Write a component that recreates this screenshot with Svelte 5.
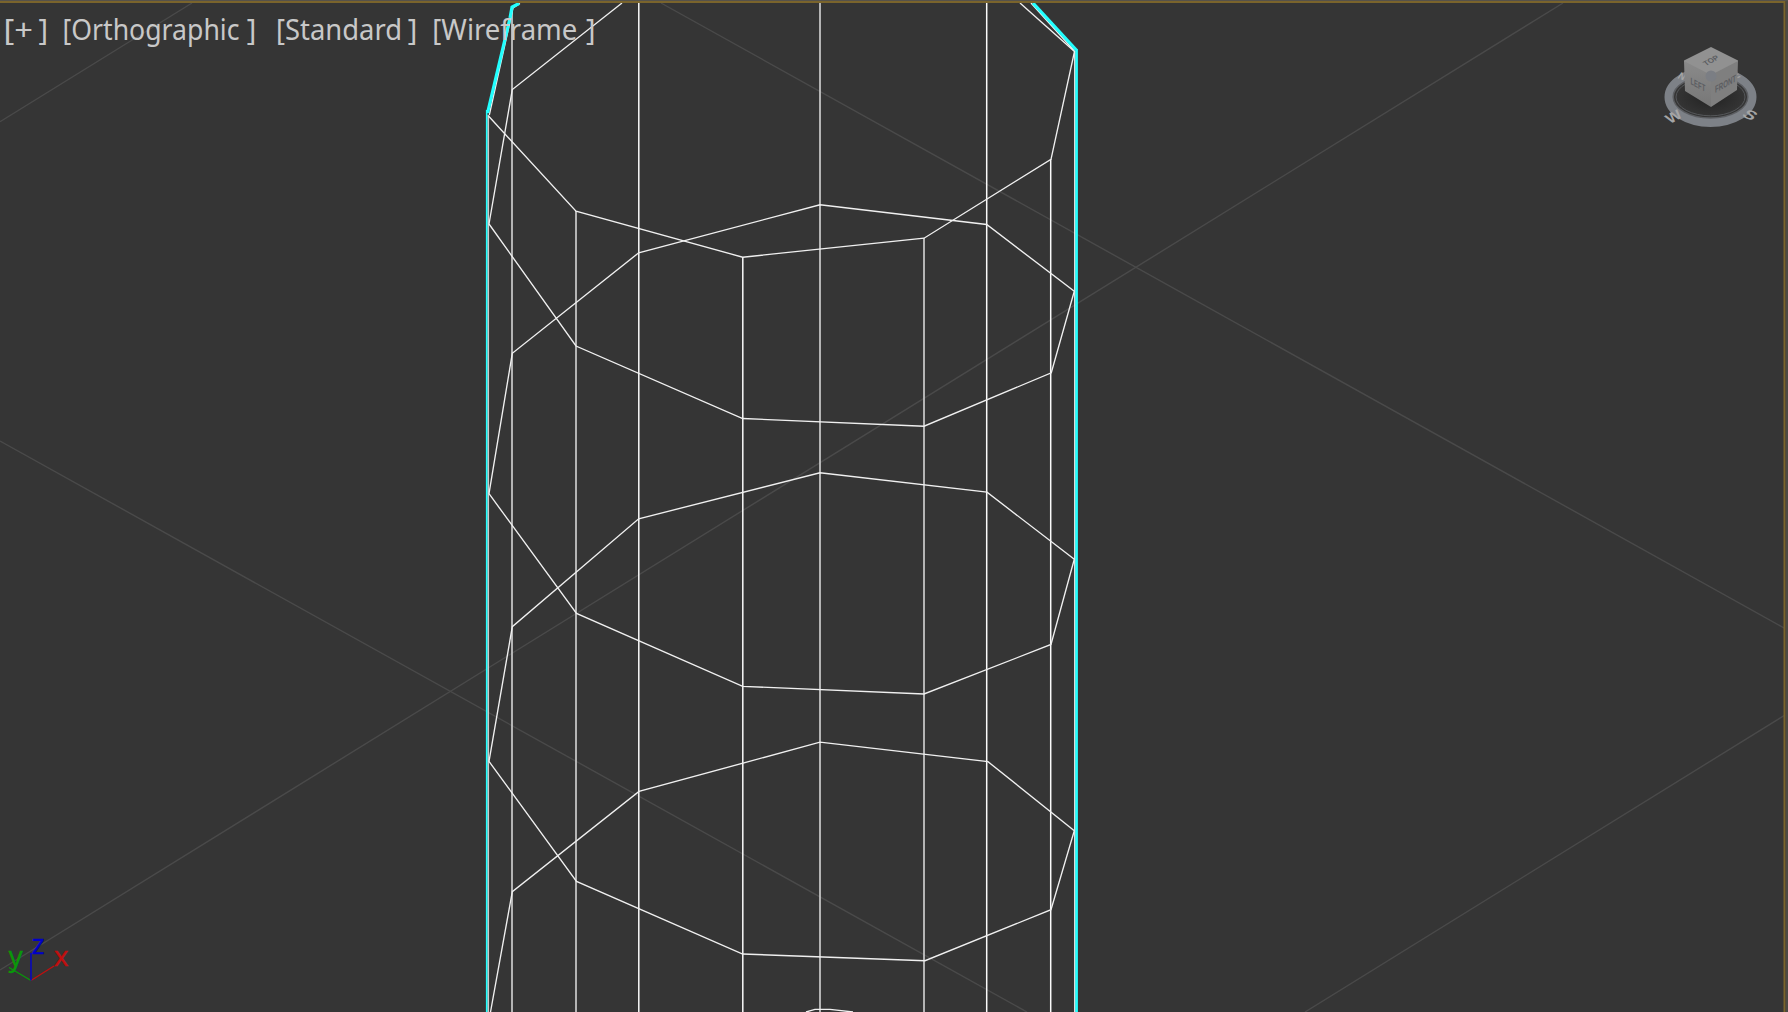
<script>
  const grid = [
    [0, 121.7, 192, 3], [661, 3, 1785, 628.5], [0, 441, 1027, 1012],
    [0, 970, 1563, 3], [1305, 1012, 1785, 715]
  ];
  // [x, top, tone]
  const columns = [
    [512, 8, 'dim'], [576, 211, 'dim'], [638.8, 3, 'lit'], [742.8, 257, 'lit'],
    [820, 3, 'dim'], [924, 238, 'dim'], [986.7, 3, 'lit'], [1050.7, 159, 'lit']
  ];
  const rings = [
    '1020,3 1074.5,51.5 1051,159.3 924,238.2 742.7,257.2 576,211.2 488.5,116',
    '622,3 512.3,89.5 489,224 576,346 742.7,418.5 924,426.2 1051.3,372.8 1074.3,291.3 986.7,224.5 820,204.8 638.7,252.8 512.3,353.3 489,493.7 576.5,613.4 742.7,686.3 924,694 1051,644.5 1074.3,559.3 987,492.2 820,472.8 638.7,518.8 512.3,626.7 489,761.4 576.5,881.4 742.7,954 925,960.7 1051,909.7 1074.3,830.7 988,761.7 820,742.2 639,791.4 512.3,891.7 490.5,1012',
    '806,1012 815,1009.3 830,1009.3 853,1012'
  ];
  // [text, x, width, x of the closing bracket]
  const labels = [
    ['[+', 3.5, 29.5, 38.5], ['[Orthographic', 62.5, 177, 246.8],
    ['[Standard', 276, 126, 407.8], ['[Wireframe', 432.3, 145, 586]
  ];
</script>

<main class="viewport">
  <svg class="scene" viewBox="0 0 1788 1012">
    <g class="grid">
      {#each grid as [x1, y1, x2, y2]}<line {x1} {y1} {x2} {y2} />{/each}
    </g>
    <g class="mesh">
      {#each columns as [x, top, tone]}<line class={tone} x1={x} x2={x} y1={top} y2="1012" />{/each}
      <path class="dim" d="M488.2 115V1012" />
      <path class="lit" d="M1074.9 51V1012" />
      {#each rings as points}<polyline {points} />{/each}
      <path d="M520 3.5L513 8L489.3 115M1031 3L1074.5 51" />
    </g>
    <path class="outline wide" d="M519 3.5L512 7L510 18L487.5 113" />
    <path class="outline thin" d="M486.7 110V1012" />
    <path class="outline wide" d="M1033 3L1076.3 50" />
    <path class="outline" d="M1076.6 49V1012" />

    <g class="labels">
      {#each labels as [text, x, width, close]}
        <text y="39.5"><tspan {x} textLength={width} lengthAdjust="spacingAndGlyphs">{text}</tspan><tspan x={close}>]</tspan></text>
      {/each}
    </g>

    <g class="axes">
      <path class="x" d="M31 980.5L54 966" />
      <path class="y" d="M31 980.5L9 967.5" />
      <path class="z" d="M31 980.5V953" />
      <text class="xl" x="53.8" y="965.6">x</text>
      <text class="yl" x="8.5" y="965.5">y</text>
      <text class="zl" x="31.5" y="953.5">z</text>
    </g>

    <g class="cube">
      <defs>
        <radialGradient id="well"><stop offset="0" stop-color="#222" /><stop offset="1" stop-color="#363636" /></radialGradient>
        <linearGradient id="face" x2="0" y2="1"><stop offset="0" stop-color="#8a8a8a" /><stop offset="1" stop-color="#777" /></linearGradient>
      </defs>
      <ellipse class="ring" cx="1710.5" cy="97" rx="41.5" ry="25.5" />
      <ellipse class="inner" cx="1710.5" cy="97" rx="37.3" ry="21" fill="url(#well)" />
      <ellipse class="rim" cx="1710.5" cy="97" rx="34.5" ry="18.8" />
      <g class="compass">
        <text transform="matrix(.8 .3 -.5 .8 1677 78)">N</text>
        <text transform="matrix(.8 -.3 .5 .8 1735 79)">E</text>
        <text class="big" transform="matrix(.95 -.5 .6 .75 1670 124)">W</text>
        <text class="big" transform="matrix(1.1 .5 -.7 .7 1741 116)">S</text>
      </g>
      <path fill="#919191" d="M1711 47L1738 60.5V62L1711 76L1684 62V60.5Z" />
      <path fill="url(#face)" d="M1684 61L1711 75V107L1685 91Z" />
      <path fill="#7f7f7f" d="M1738 61L1711 75V107L1737 90Z" />
      <circle cx="1711" cy="76" r="5.5" fill="#7b7e84" />
      <g class="names">
        <text transform="matrix(.75 -.4 .6 .6 1706 66)">TOP</text>
        <text transform="matrix(.66 .36 0 1.1 1690.5 84)">LEFT</text>
        <text transform="matrix(.68 -.38 0 1.1 1715 93)">FRONT</text>
      </g>
    </g>
    <path class="edge" d="M0 .5H1788M1787 0V1012" />
    <path class="frame" d="M0 2H1784.5V1012" />
  </svg>
</main>

<style>
  :global(body) { margin: 0; background: #353535; overflow: hidden; }
  .viewport { width: 1788px; height: 1012px; background: #353535; }
  .scene { display: block; width: 100%; height: 100%; }
  .grid { stroke: #4a4a4a; stroke-width: 1.4; }
  .mesh { fill: none; stroke: #f0f0f0; stroke-width: 1.35; }
  .dim { stroke: #cbcbcb; stroke-width: 1.7; }
  .lit { stroke: #fafafa; stroke-width: 1.5; }
  .outline { fill: none; stroke: #2ff; stroke-width: 2.6; }
  .wide { stroke-width: 3.2; }
  .thin { stroke-width: 1.6; }
  .labels { font: 29px "Noto Sans", "Open Sans", sans-serif; fill: #c8c8c8; }
  .axes { font: 28px "Noto Sans", "Open Sans", sans-serif; fill: none; stroke-width: 1.4; }
  .axes text { stroke-width: .3; }
  .x { stroke: #c00f0f; }
  .y { stroke: #0a970a; }
  .z { stroke: #0000d0; }
  .xl { fill: #c00f0f; stroke: #c00f0f; }
  .yl { fill: #0a970a; stroke: #0a970a; }
  .zl { fill: #0000c8; stroke: #0000c8; }
  .ring { fill: none; stroke: #7d8187; stroke-width: 9; }
  .inner { stroke: #5c5e62; stroke-width: 1.5; }
  .rim { fill: none; stroke: #55575a; stroke-width: 1; }
  .compass { font: bold 11px "Liberation Sans", sans-serif; fill: #a5a5a5; }
  .big { font-size: 15px; }
  .names { font: bold 9px "Liberation Sans", sans-serif; fill: #5b5d61; }
  .edge { fill: none; stroke: #55524b; stroke-width: 1.5; }
  .frame { fill: none; stroke: #7a642c; stroke-width: 2; }
</style>
